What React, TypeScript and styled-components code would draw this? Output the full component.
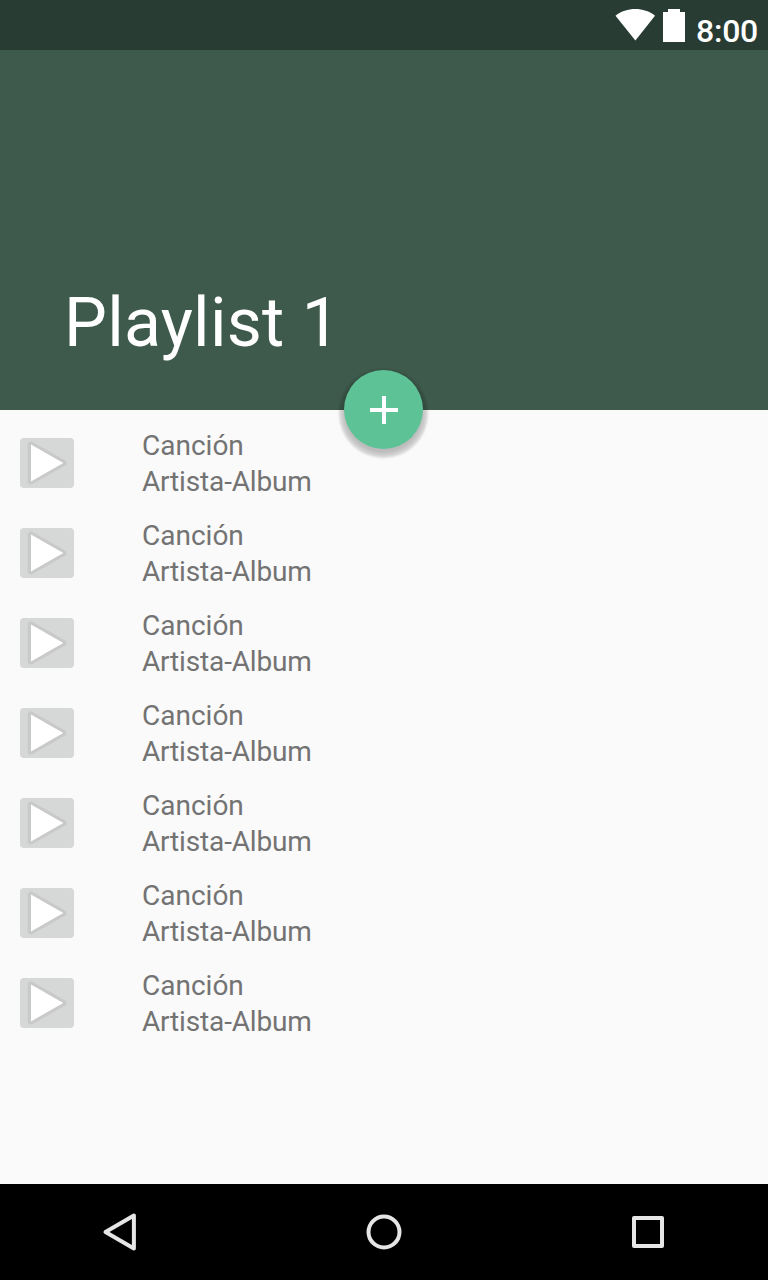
import React from "react";
import styled, { createGlobalStyle } from "styled-components";

const GlobalStyle = createGlobalStyle`
  html, body { margin: 0; padding: 0; }
  body { background: #fafafa; font-family: Roboto, "Liberation Sans", sans-serif; }
`;

const Screen = styled.div`
  width: 768px;
  height: 1280px;
  display: flex;
  flex-direction: column;
  overflow: hidden;
  background: #fafafa;
`;

const StatusBar = styled.div`
  height: 50px;
  flex: none;
  box-sizing: border-box;
  padding: 8px 10px 0 0;
  display: flex;
  justify-content: flex-end;
  align-items: flex-start;
  background: #283c33;
  color: #fff;
`;

const StatusIcons = styled.svg`
  display: block;
  margin-right: 10px;
`;

const Clock = styled.time`
  font-size: 32px;
  font-weight: 500;
  line-height: 46px;
  letter-spacing: -0.25px;
`;

const Header = styled.header`
  position: relative;
  height: 360px;
  flex: none;
  box-sizing: border-box;
  padding: 0 64px 47px;
  display: flex;
  align-items: flex-end;
  background: #3e5a4c;
`;

const Title = styled.h1`
  margin: 0;
  font-size: 68px;
  font-weight: 400;
  line-height: 80px;
  letter-spacing: 0.25px;
  color: #fff;
`;

const AddButton = styled.button`
  position: absolute;
  left: 344px;
  bottom: -39px;
  width: 79px;
  height: 79px;
  padding: 0;
  border: 0;
  border-radius: 50%;
  display: flex;
  align-items: center;
  justify-content: center;
  background: #5ec297;
  box-shadow: 0 4px 5px 2px rgba(0, 0, 0, 0.17), 0 4px 2px 5px rgba(0, 0, 0, 0.1);
`;

const SongList = styled.ul`
  flex: 1;
  margin: 0;
  padding: 18px 20px 0;
  list-style: none;
`;

const SongRow = styled.li`
  height: 90px;
  display: flex;
  gap: 68px;
`;

const PlayButton = styled.button`
  width: 54px;
  height: 50px;
  margin: 10px 0 0;
  padding: 0;
  border: 0;
  border-radius: 4px;
  background: #d6d8d7;
  svg { display: block; }
`;

const SongText = styled.div`
  font-size: 28px;
  line-height: 36px;
  color: #737373;
`;

const SongDetail = styled.div`
  letter-spacing: -0.16px;
`;

const NavBar = styled.nav`
  height: 96px;
  flex: none;
  display: flex;
  justify-content: center;
  background: #000;
`;

const NavButton = styled.button`
  width: 264px;
  height: 96px;
  flex: none;
  padding: 0;
  border: 0;
  display: flex;
  align-items: center;
  justify-content: center;
  background: transparent;
  svg { fill: none; stroke: #e6e6e6; stroke-width: 4; stroke-linejoin: round; }
`;

const songs = Array.from({ length: 7 }, () => ({ title: "Canción", detail: "Artista-Album" }));

export default function App() {
  return (
    <>
      <GlobalStyle />
      <Screen>
        <StatusBar>
          <StatusIcons width="71" height="36" viewBox="0 0 71 36" fill="#fff">
            <path d="M0.5 7.7C11.5 -1.2 29 -1.2 40 7.7L20.4 32.5Z" />
            <path d="M48 4H53V1H65V4H70V34H48Z" />
          </StatusIcons>
          <Clock>8:00</Clock>
        </StatusBar>
        <Header>
          <Title>Playlist 1</Title>
          <AddButton aria-label="Añadir">
            <svg width="79" height="79" viewBox="0 0 79 79">
              <path d="M38 26H42V38H54V42H42V54H38V42H26V38H38Z" fill="#fff" />
            </svg>
          </AddButton>
        </Header>
        <SongList>
          {songs.map((song, i) => (
            <SongRow key={i}>
              <PlayButton aria-label="Reproducir">
                <svg width="54" height="50" viewBox="0 0 54 50">
                  <path d="M11 6.8V43.2L43.2 25Z" fill="#c8c9c8" stroke="#c8c9c8" strokeWidth="6.6" strokeLinejoin="round" />
                  <path d="M11 6.6V43.4L43.3 25Z" fill="#fff" />
                </svg>
              </PlayButton>
              <SongText>
                <div>{song.title}</div>
                <SongDetail>{song.detail}</SongDetail>
              </SongText>
            </SongRow>
          ))}
        </SongList>
        <NavBar>
          <NavButton aria-label="Atrás">
            <svg width="48" height="48" viewBox="0 0 48 48">
              <path d="M37.9 7.5V40.5L9.5 24Z" />
            </svg>
          </NavButton>
          <NavButton aria-label="Inicio">
            <svg width="48" height="48" viewBox="0 0 48 48">
              <circle cx="24" cy="24" r="15.5" />
            </svg>
          </NavButton>
          <NavButton aria-label="Recientes">
            <svg width="48" height="48" viewBox="0 0 48 48">
              <rect x="10" y="10" width="28" height="28" />
            </svg>
          </NavButton>
        </NavBar>
      </Screen>
    </>
  );
}
